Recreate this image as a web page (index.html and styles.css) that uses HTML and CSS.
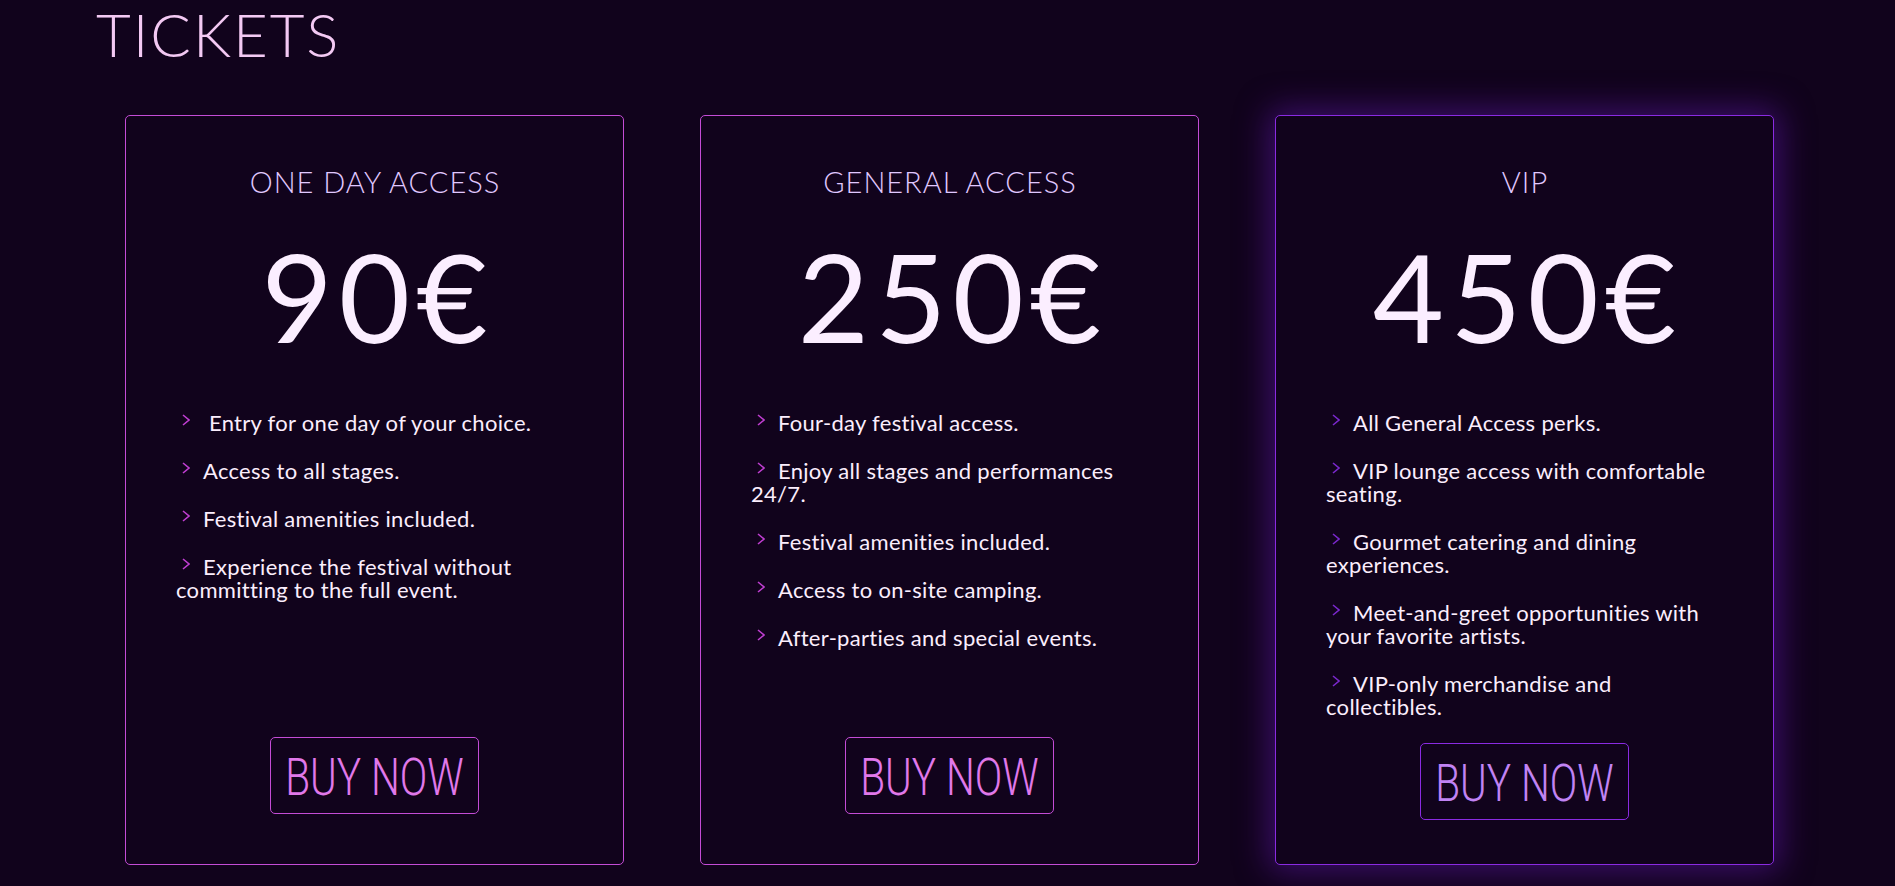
FILE: index.html
```html
<!DOCTYPE html>
<html lang="en">
<head>
<meta charset="utf-8">
<title>Tickets</title>
<link rel="stylesheet" href="styles.css">
</head>
<body>
<section class="tickets">
  <h1 class="tickets-title">TICKETS</h1>
  <div class="ticket-grid">
    <article class="ticket">
      <h2 class="ticket-name">ONE DAY ACCESS</h2>
      <p class="ticket-price">90€</p>
      <ul class="perks">
        <li><svg class="chev" viewBox="0 0 8 12" width="8" height="12"><polyline points="1,1 7,6 1,11"/></svg>&nbsp;Entry for one day of your choice.</li>
        <li><svg class="chev" viewBox="0 0 8 12" width="8" height="12"><polyline points="1,1 7,6 1,11"/></svg>Access to all stages.</li>
        <li><svg class="chev" viewBox="0 0 8 12" width="8" height="12"><polyline points="1,1 7,6 1,11"/></svg>Festival amenities included.</li>
        <li><svg class="chev" viewBox="0 0 8 12" width="8" height="12"><polyline points="1,1 7,6 1,11"/></svg>Experience the festival without committing to the full event.</li>
      </ul>
      <button class="buy"><span>BUY NOW</span></button>
    </article>
    <article class="ticket">
      <h2 class="ticket-name">GENERAL ACCESS</h2>
      <p class="ticket-price">250€</p>
      <ul class="perks">
        <li><svg class="chev" viewBox="0 0 8 12" width="8" height="12"><polyline points="1,1 7,6 1,11"/></svg>Four-day festival access.</li>
        <li><svg class="chev" viewBox="0 0 8 12" width="8" height="12"><polyline points="1,1 7,6 1,11"/></svg>Enjoy all stages and performances 24/7.</li>
        <li><svg class="chev" viewBox="0 0 8 12" width="8" height="12"><polyline points="1,1 7,6 1,11"/></svg>Festival amenities included.</li>
        <li><svg class="chev" viewBox="0 0 8 12" width="8" height="12"><polyline points="1,1 7,6 1,11"/></svg>Access to on-site camping.</li>
        <li><svg class="chev" viewBox="0 0 8 12" width="8" height="12"><polyline points="1,1 7,6 1,11"/></svg>After-parties and special events.</li>
      </ul>
      <button class="buy"><span>BUY NOW</span></button>
    </article>
    <article class="ticket ticket-vip">
      <h2 class="ticket-name">VIP</h2>
      <p class="ticket-price">450€</p>
      <ul class="perks">
        <li><svg class="chev" viewBox="0 0 8 12" width="8" height="12"><polyline points="1,1 7,6 1,11"/></svg>All General Access perks.</li>
        <li><svg class="chev" viewBox="0 0 8 12" width="8" height="12"><polyline points="1,1 7,6 1,11"/></svg>VIP lounge access with comfortable seating.</li>
        <li><svg class="chev" viewBox="0 0 8 12" width="8" height="12"><polyline points="1,1 7,6 1,11"/></svg>Gourmet catering and dining experiences.</li>
        <li><svg class="chev" viewBox="0 0 8 12" width="8" height="12"><polyline points="1,1 7,6 1,11"/></svg>Meet-and-greet opportunities with your favorite artists.</li>
        <li><svg class="chev" viewBox="0 0 8 12" width="8" height="12"><polyline points="1,1 7,6 1,11"/></svg>VIP-only merchandise and collectibles.</li>
      </ul>
      <button class="buy"><span>BUY NOW</span></button>
    </article>
  </div>
</section>
</body>
</html>
```
FILE: styles.css
```css
* { box-sizing: border-box; }
html, body {
  margin: 0;
  padding: 0;
  background: #11031c;
  height: 100%;
  overflow: hidden;
}
body {
  font-family: Lato, "Noto Sans", sans-serif;
  color: #fbeefd;
}
.tickets {
  padding: 1px 96px 0;
}
.tickets-title {
  margin: 0;
  font-family: Lato, sans-serif;
  font-weight: 300;
  font-size: 60px;
  line-height: 66px;
  letter-spacing: 2px;
  color: #f3c9f3;
}
.ticket-grid {
  display: grid;
  grid-template-columns: repeat(3, 499px);
  column-gap: 76px;
  margin: 48px 0 0 29px;
}
.ticket {
  height: 750px;
  border: 1px solid #c44cd6;
  border-radius: 5px;
  background: #11031c;
  display: flex;
  flex-direction: column;
  padding: 48px 50px 50px;
}
.ticket > * {
  flex-shrink: 0;
}
.ticket-vip {
  border-color: #8a2be2;
  box-shadow: 0 0 32px 6px rgba(95, 22, 170, 0.55);
}
.ticket-name {
  margin: 0;
  text-align: center;
  font-weight: 300;
  font-size: 29px;
  line-height: 35px;
  letter-spacing: 1px;
  text-indent: 1px;
  color: #e0c8ff;
}
.ticket-price {
  margin: 36px 0 0;
  text-align: center;
  font-weight: 400;
  font-size: 123px;
  line-height: 122px;
  letter-spacing: 6px;
  text-indent: 6px;
  color: #fbeeff;
}
.perks {
  list-style: none;
  margin: 54px 0 0;
  padding: 0;
  font-size: 22px;
  line-height: 23px;
  letter-spacing: 0.3px;
}
.perks li {
  margin-bottom: 25px;
}
.chev {
  vertical-align: 5px;
  margin: 0 13px 0 6px;
  fill: none;
  stroke: #c03ed2;
  stroke-width: 1.6;
}
.ticket-vip .chev {
  stroke: #7a28cc;
}
.buy {
  margin-top: auto;
  align-self: center;
  display: flex;
  justify-content: center;
  align-items: center;
  width: 209px;
  height: 77px;
  padding: 4px 0 0;
  border: 1px solid #c44cd6;
  border-radius: 5px;
  background: transparent;
  color: #e078ea;
  font-family: Roboto, sans-serif;
  font-weight: 300;
  font-size: 52px;
  line-height: 1;
  cursor: pointer;
}
.buy span {
  flex-shrink: 0;
  white-space: nowrap;
  transform: scaleX(0.78);
}
.ticket-vip .buy {
  border-color: #8a2be2;
  color: #c183f4;
}
```
